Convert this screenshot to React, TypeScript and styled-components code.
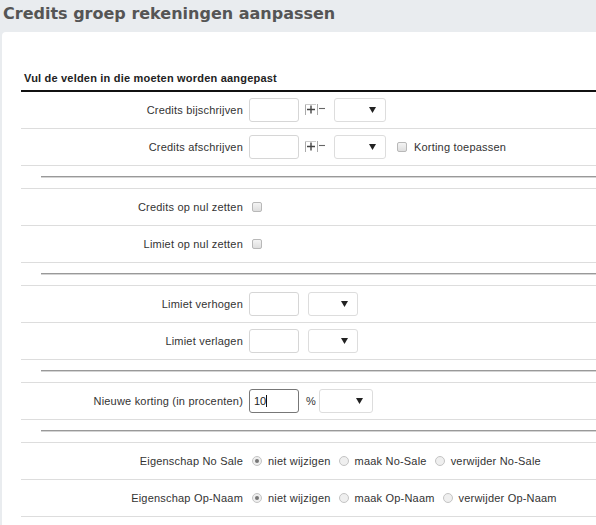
import React from "react";
import styled, { createGlobalStyle } from "styled-components";

const GlobalStyle = createGlobalStyle`
  html, body {
    margin: 0;
    padding: 0;
    background-color: #e9ecef;
    overflow: hidden;
  }
  body {
    font-family: "Liberation Sans", Arial, sans-serif;
    font-size: 11px;
    letter-spacing: 0.2px;
    color: #333;
  }
`;

const PageTitle = styled.h1`
  margin: 0;
  padding: 4px 3px 8px;
  font-family: "DejaVu Sans", Verdana, sans-serif;
  font-size: 16px;
  line-height: 20px;
  font-weight: bold;
  letter-spacing: 0;
  color: #555;
`;

const Panel = styled.div`
  margin-left: 2px;
  width: calc(100% + 20px);
  background-color: #fff;
  border-top-left-radius: 4px;
  padding: 39px 0 40px 19px;
  box-sizing: border-box;
`;

const TableHead = styled.div`
  padding: 0 0 5px 3px;
  font-weight: bold;
  font-size: 11px;
  line-height: 14px;
  color: #222;
  border-bottom: 2px solid #111;
`;

const Row = styled.div`
  display: flex;
  align-items: center;
  height: 37px;
  box-sizing: border-box;
  border-bottom: 1px solid #ddd;
`;

const Label = styled.div`
  width: 228px;
  flex-shrink: 0;
  box-sizing: border-box;
  padding-right: 6px;
  text-align: right;
  white-space: nowrap;
`;

const Fields = styled.div`
  display: flex;
  align-items: center;
  white-space: nowrap;
`;

const DividerRow = styled.div`
  height: 23px;
  box-sizing: border-box;
  border-bottom: 1px solid #ddd;
  padding: 10px 0 0 20px;
`;

const DividerLine = styled.div`
  border-top: 1px solid #999;
  border-bottom: 1px solid #d4d4d4;
`;

const TextInput = styled.input<{ $focused?: boolean }>`
  width: 50px;
  height: 24px;
  box-sizing: border-box;
  border: 1px solid ${(p) => (p.$focused ? "#777" : "#d6d6d6")};
  border-radius: 3px;
  padding: 0 4px;
  font-family: "Liberation Sans", Arial, sans-serif;
  font-size: 11px;
  color: #222;
  outline: none;
  background: #fff;
`;

const InputWrap = styled.span`
  position: relative;
  display: inline-flex;
`;

const Caret = styled.span`
  position: absolute;
  left: 17px;
  top: 6px;
  width: 1px;
  height: 12px;
  background: #111;
`;

const SelectWrap = styled.span<{ $ml: number; $w: number }>`
  position: relative;
  display: inline-flex;
  margin-left: ${(p) => p.$ml}px;
  width: ${(p) => p.$w}px;
`;

const Select = styled.select`
  appearance: none;
  width: 100%;
  height: 24px;
  box-sizing: border-box;
  border: 1px solid #ddd;
  border-radius: 3px;
  background: #fff;
  font-family: "Liberation Sans", Arial, sans-serif;
  font-size: 11px;
  outline: none;
`;

const Arrow = styled.svg`
  position: absolute;
  right: 10px;
  top: 9px;
  pointer-events: none;
`;

const PlusMinus = styled.svg`
  margin-left: 6px;
  flex-shrink: 0;
`;

const Check = styled.span<{ $ml: number }>`
  display: inline-block;
  width: 8px;
  height: 8px;
  margin-left: ${(p) => p.$ml}px;
  border: 1px solid #b8b8b8;
  border-radius: 2px;
  background: linear-gradient(#f4f4f4, #dedede);
`;

const CheckText = styled.span`
  margin-left: 7px;
`;

const Unit = styled.span`
  margin-left: 7px;
`;

const Radio = styled.span<{ $checked?: boolean; $ml: number }>`
  display: inline-flex;
  align-items: center;
  justify-content: center;
  width: 8px;
  height: 8px;
  margin-left: ${(p) => p.$ml}px;
  border: 1px solid #c4c4c4;
  border-radius: 50%;
  background: #efefef;
  &::after {
    content: "";
    display: ${(p) => (p.$checked ? "block" : "none")};
    width: 4px;
    height: 4px;
    border-radius: 50%;
    background: #777;
  }
`;

const RadioText = styled.span`
  margin-left: 6px;
`;

function DropDown({ ml, w }: { ml: number; w: number }) {
  return (
    <SelectWrap $ml={ml} $w={w}>
      <Select>
        <option></option>
      </Select>
      <Arrow width="7" height="6" viewBox="0 0 7 6">
        <path d="M0 0 L7 0 L3.5 6 Z" fill="#222" />
      </Arrow>
    </SelectWrap>
  );
}

function PlusMinusIcon() {
  return (
    <PlusMinus width="23" height="12" viewBox="0 0 23 12">
      <path d="M0.5 0 V11" stroke="#aaa" strokeWidth="1" />
      <path d="M0 0.5 H11" stroke="#ccc" strokeWidth="1" />
      <path d="M2 5.5 H10 M6 1.5 V9.5" stroke="#444" strokeWidth="1.4" />
      <path d="M12.5 0 V11" stroke="#aaa" strokeWidth="1" />
      <path d="M14 4.5 H20" stroke="#666" strokeWidth="1.1" />
    </PlusMinus>
  );
}

function RadioGroup({ options }: { options: string[] }) {
  return (
    <Fields>
      {options.map((o, i) => (
        <React.Fragment key={o}>
          <Radio $checked={i === 0} $ml={i === 0 ? 3 : 8} />
          <RadioText>{o}</RadioText>
        </React.Fragment>
      ))}
    </Fields>
  );
}

export default function App() {
  return (
    <>
      <GlobalStyle />
      <PageTitle>Credits groep rekeningen aanpassen</PageTitle>
      <Panel>
        <TableHead>Vul de velden in die moeten worden aangepast</TableHead>

        <Row>
          <Label>Credits bijschrijven</Label>
          <Fields>
            <TextInput />
            <PlusMinusIcon />
            <DropDown ml={6} w={52} />
          </Fields>
        </Row>
        <Row>
          <Label>Credits afschrijven</Label>
          <Fields>
            <TextInput />
            <PlusMinusIcon />
            <DropDown ml={6} w={52} />
            <Check $ml={11} />
            <CheckText>Korting toepassen</CheckText>
          </Fields>
        </Row>
        <DividerRow>
          <DividerLine />
        </DividerRow>

        <Row>
          <Label>Credits op nul zetten</Label>
          <Fields>
            <Check $ml={3} />
          </Fields>
        </Row>
        <Row>
          <Label>Limiet op nul zetten</Label>
          <Fields>
            <Check $ml={3} />
          </Fields>
        </Row>
        <DividerRow>
          <DividerLine />
        </DividerRow>

        <Row>
          <Label>Limiet verhogen</Label>
          <Fields>
            <TextInput />
            <DropDown ml={9} w={50} />
          </Fields>
        </Row>
        <Row>
          <Label>Limiet verlagen</Label>
          <Fields>
            <TextInput />
            <DropDown ml={9} w={50} />
          </Fields>
        </Row>
        <DividerRow>
          <DividerLine />
        </DividerRow>

        <Row>
          <Label>Nieuwe korting (in procenten)</Label>
          <Fields>
            <InputWrap>
              <TextInput $focused defaultValue="10" />
              <Caret />
            </InputWrap>
            <Unit>%</Unit>
            <DropDown ml={3} w={54} />
          </Fields>
        </Row>
        <DividerRow>
          <DividerLine />
        </DividerRow>

        <Row>
          <Label>Eigenschap No Sale</Label>
          <RadioGroup options={["niet wijzigen", "maak No-Sale", "verwijder No-Sale"]} />
        </Row>
        <Row>
          <Label>Eigenschap Op-Naam</Label>
          <RadioGroup options={["niet wijzigen", "maak Op-Naam", "verwijder Op-Naam"]} />
        </Row>
      </Panel>
    </>
  );
}
